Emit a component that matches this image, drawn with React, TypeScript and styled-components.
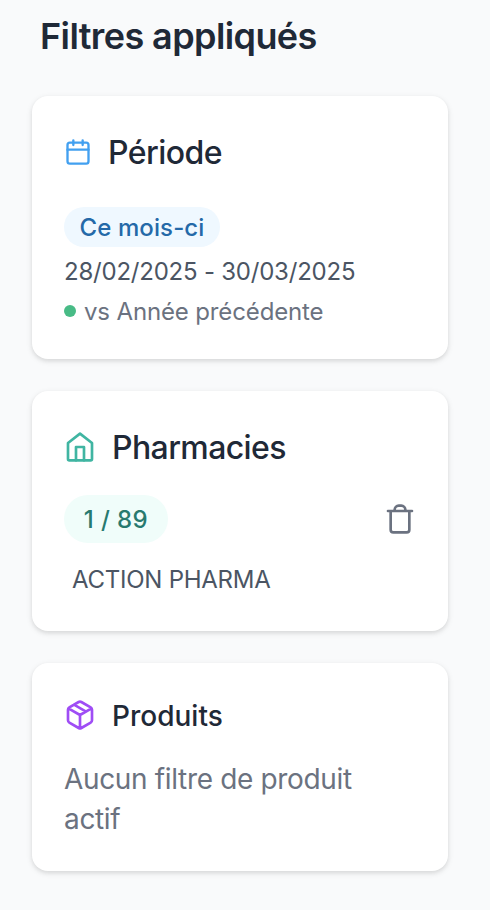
import React from 'react';
import styled, { createGlobalStyle } from 'styled-components';

const Global = createGlobalStyle`
  * { box-sizing: border-box; }
  body { margin: 0; background: #f9fafb; font-family: Inter, "Liberation Sans", sans-serif; }
`;
const Page = styled.main`
  width: 490px; height: 910px; padding: 12px 42px 0 32px; overflow: hidden; background: #f9fafb;
`;
const Title = styled.h1`
  margin: 0 0 36px 8px; height: 48px; line-height: 48px; font-size: 36px; font-weight: 600; color: #1f2937;
  white-space: nowrap; letter-spacing: -0.6px;
`;
const Card = styled.section<{ $h: number; $top: number; $gap: number }>`
  width: 416px; height: ${p => p.$h}px; margin-bottom: ${p => p.$gap}px; padding: ${p => p.$top}px 32px 0;
  border-radius: 16px; background: #fff;
  box-shadow: 0 2px 6px rgba(0,0,0,.1), 0 2px 4px rgba(0,0,0,.06);
`;
const Heading = styled.h2<{ $size: number; $ls?: number }>`
  display: flex; align-items: center; gap: 16px; margin: 0; height: 40px;
  font-size: ${p => p.$size}px; font-weight: 480; color: #1f2937; white-space: nowrap;
  letter-spacing: ${p => p.$ls ?? 0}px;
`;
const Label = styled.span`padding-top: 1px;`;
const Icon = styled.svg<{ $c: string }>`
  flex: none; fill: none; stroke: ${p => p.$c}; stroke-width: 2; stroke-linecap: round; stroke-linejoin: round;
`;
const Pill = styled.span<{ $green?: boolean }>`
  display: flex; align-items: center; justify-content: center; width: ${p => (p.$green ? 104 : 156)}px;
  height: ${p => (p.$green ? 48 : 40)}px; padding-top: 1px; border-radius: 24px;
  font-size: 24px; font-weight: 480; white-space: nowrap;
  letter-spacing: ${p => (p.$green ? 0.4 : 0.1)}px;
  background: ${p => (p.$green ? '#f0fdfa' : '#eff8ff')}; color: ${p => (p.$green ? '#287a6f' : '#2469a8')};
`;
const Line = styled.p<{ $size?: number; $c?: string; $ls?: number }>`
  margin: 0; font-size: ${p => p.$size ?? 24}px; line-height: 40px;
  color: ${p => p.$c ?? '#4b5563'}; letter-spacing: ${p => p.$ls ?? 0}px;
`;
const Comparison = styled.div`display: flex; align-items: center; gap: 8px;`;
const Dot = styled.i`
  width: 12px; height: 12px; margin-bottom: 2px; border-radius: 50%; background: #48bb86;
`;
const Period = styled.div`margin-top: 35px;`;
const Dates = styled.div`margin-top: 5px;`;
const Row = styled.div`
  display: flex; align-items: center; justify-content: space-between; margin-top: 28px;
`;
const Clear = styled.button`
  display: flex; padding: 0; border: 0; background: none;
`;
const Selected = styled.div`margin: 17px 0 0 8px;`;
const Empty = styled.div`width: 320px; margin-top: 24px;`;

export default function App() {
  return (
    <>
      <Global />
      <Page>
        <Title>Filtres appliqués</Title>
        <Card $h={263} $top={36} $gap={32}>
          <Heading $size={32} $ls={-0.55}>
            <Icon $c="#42a0f0" width="28" height="28" viewBox="0 0 24 24">
              <rect x="3" y="4" width="18" height="18" rx="2" /><path d="M8 2v4M16 2v4M3 10h18" />
            </Icon>
            <Label>Période</Label>
          </Heading>
          <Period>
            <Pill>Ce mois-ci</Pill>
            <Dates>
              <Line $ls={-0.22}>28/02/2025 - 30/03/2025</Line>
              <Comparison>
                <Dot />
                <Line $c="#6b7280" $ls={-0.14}>vs Année précédente</Line>
              </Comparison>
            </Dates>
          </Period>
        </Card>
        <Card $h={240} $top={36} $gap={32}>
          <Heading $size={32} $ls={-0.6}>
            <Icon $c="#40b5a2" width="32" height="32" viewBox="0 0 24 24">
              <path d="m3 9 9-7 9 7v12a1 1 0 0 1-1 1H4a1 1 0 0 1-1-1z" /><path d="M9 22V12h6v10" />
            </Icon>
            <Label>Pharmacies</Label>
          </Heading>
          <Row>
            <Pill $green>1 / 89</Pill>
            <Clear aria-label="Supprimer">
              <Icon $c="#6b7280" width="32" height="32" viewBox="0 0 24 24">
                <path d="M3 6h18M19 6v14a2 2 0 0 1-2 2H7a2 2 0 0 1-2-2V6M8 6V5a3 3 0 0 1 3-3h2a3 3 0 0 1 3 3v1" />
              </Icon>
            </Clear>
          </Row>
          <Selected><Line $ls={-0.25}>ACTION PHARMA</Line></Selected>
        </Card>
        <Card $h={208} $top={32} $gap={0}>
          <Heading $size={28}>
            <Icon $c="#9f4df5" width="32" height="32" viewBox="0 0 24 24">
              <path d="M21 8a2 2 0 0 0-1-1.73l-7-4a2 2 0 0 0-2 0l-7 4A2 2 0 0 0 3 8v8a2 2 0 0 0 1 1.73l7 4a2 2 0 0 0 2 0l7-4A2 2 0 0 0 21 16ZM3.3 7l8.7 5 8.7-5M12 22V12M7.5 4.27l9 5.15" />
            </Icon>
            <Label>Produits</Label>
          </Heading>
          <Empty><Line $size={28} $c="#6b7280" $ls={-0.34}>Aucun filtre de produit actif</Line></Empty>
        </Card>
      </Page>
    </>
  );
}
